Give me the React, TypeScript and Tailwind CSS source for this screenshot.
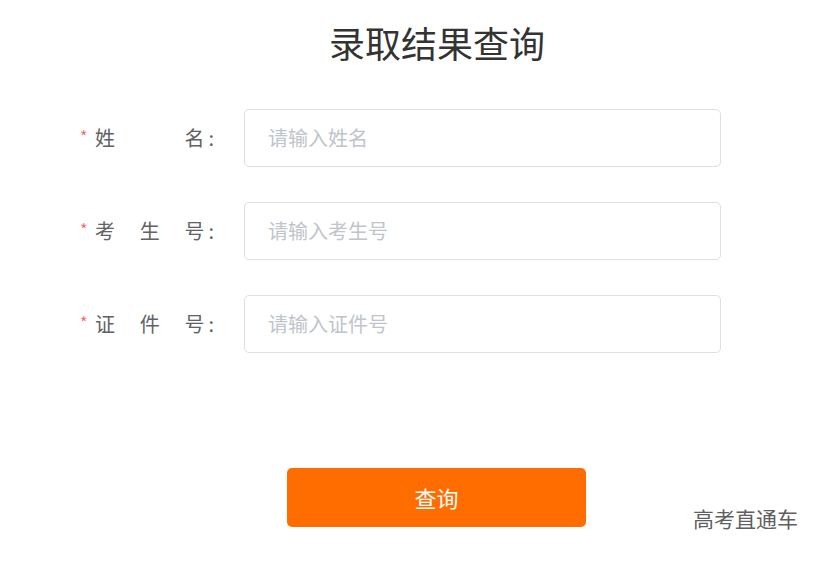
import React from "react";

const font = { fontFamily: '"Noto Sans CJK SC", "Noto Sans", sans-serif' };

function Row({ chars, placeholder }: { chars: string[]; placeholder: string }) {
  return (
    <div className="flex items-center h-[58px]">
      <div className="w-[80px]" />
      <span className="w-[15px] text-[#f56c6c] text-[16px] leading-none -mt-[4px]">*</span>
      <div className="w-[119px] flex justify-between text-[20px] text-[#606266] leading-none">
        {chars.map((c, i) =>
          i === chars.length - 1 ? (
            <span key={i} className="flex">
              <span>{c}</span>
              <span className="ml-[4px]">:</span>
            </span>
          ) : (
            <span key={i}>{c}</span>
          )
        )}
      </div>
      <div className="w-[30px]" />
      <div className="w-[477px] h-[58px] border border-[#dcdfe6] rounded-[5px] flex items-center pl-[23px] text-[20px] text-[#c0c4cc]">
        {placeholder}
      </div>
    </div>
  );
}

export default function App() {
  return (
    <div className="relative w-[830px] h-[562px] bg-white overflow-hidden" style={font}>
      <div className="pt-[19px] pl-[44px] text-center text-[36px] leading-[46px] text-[#333333]">录取结果查询</div>
      <div className="mt-[44px] flex flex-col gap-[35px]">
        <Row chars={["姓", "名"]} placeholder="请输入姓名" />
        <Row chars={["考", "生", "号"]} placeholder="请输入考生号" />
        <Row chars={["证", "件", "号"]} placeholder="请输入证件号" />
      </div>
      <div className="mt-[115px] flex pl-[287px]">
        <div className="w-[299px] h-[59px] rounded-[5px] bg-[#ff6d00] text-white text-[22px] flex items-center justify-center">
          查询
        </div>
      </div>
      <div className="absolute left-[693px] top-[508px] text-[21px] text-[#5f5f5f] leading-none">高考直通车</div>
    </div>
  );
}
